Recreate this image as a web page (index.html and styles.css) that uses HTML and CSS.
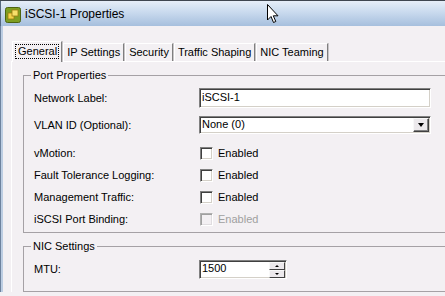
FILE: index.html
```html
<!DOCTYPE html>
<html lang="en">
<head>
    <meta charset="UTF-8">
    <title>iSCSI-1 Properties</title>
    <link rel="stylesheet" href="styles.css">
</head>
<body>
<div class="window">
    <div class="titlebar">
        <svg class="app-icon" width="16" height="16" viewBox="0 0 16 16">
            <rect x="0.5" y="0.5" width="15" height="15" rx="2" fill="#7e9e22" stroke="#4d6410"/>
            <rect x="3" y="6" width="6" height="6" fill="#f2d34a" stroke="#9a7a10" stroke-width="0.8"/>
            <rect x="7" y="3" width="6" height="6" fill="#f6df6a" stroke="#9a7a10" stroke-width="0.8"/>
        </svg>
        <span class="title">iSCSI-1 Properties</span>
        <svg class="cursor" width="13" height="20" viewBox="0 0 13 20">
            <path d="M0.5 0.5 L0.5 16 L4 12.5 L6.5 18.5 L8.8 17.5 L6.3 11.8 L11 11.8 Z" fill="#fff" stroke="#000" stroke-width="1"/>
        </svg>
    </div>
    <div class="client">
        <div class="tabs">
            <div class="tab active"><span class="focus">General</span></div>
            <div class="tab">IP Settings</div>
            <div class="tab">Security</div>
            <div class="tab">Traffic Shaping</div>
            <div class="tab">NIC Teaming</div>
        </div>
        <div class="panel">
            <fieldset class="group port">
                <legend>Port Properties</legend>
                <div class="row row-input">
                    <span class="label">Network Label:</span>
                    <div class="textbox wide">iSCSI-1</div>
                </div>
                <div class="row row-combo">
                    <span class="label">VLAN ID (Optional):</span>
                    <div class="textbox wide combo">None (0)<span class="drop-btn"><span class="arrow"></span></span></div>
                </div>
                <div class="row">
                    <span class="label">vMotion:</span>
                    <div class="check"><span class="box"></span>Enabled</div>
                </div>
                <div class="row">
                    <span class="label">Fault Tolerance Logging:</span>
                    <div class="check"><span class="box"></span>Enabled</div>
                </div>
                <div class="row">
                    <span class="label">Management Traffic:</span>
                    <div class="check"><span class="box"></span>Enabled</div>
                </div>
                <div class="row">
                    <span class="label">iSCSI Port Binding:</span>
                    <div class="check disabled"><span class="box"></span>Enabled</div>
                </div>
            </fieldset>
            <fieldset class="group nic">
                <legend>NIC Settings</legend>
                <div class="row row-input">
                    <span class="label">MTU:</span>
                    <div class="textbox spin">1500
                        <span class="spin-btns">
                            <span class="spin-btn"><span class="arrow up"></span></span>
                            <span class="spin-btn"><span class="arrow"></span></span>
                        </span>
                    </div>
                </div>
            </fieldset>
        </div>
    </div>
</div>
</body>
</html>
```

FILE: styles.css
```css
body {
    margin: 0;
    background-color: #f3f0f3;
    font-family: "Liberation Sans", Arial, sans-serif;
    font-size: 11px;
    color: #000;
}

.window {
    height: 296px;
    overflow: hidden;
}

.titlebar {
    position: relative;
    height: 25px;
    border-top: 1px solid #3f4650;
    background: linear-gradient(to bottom, #e6eef8 0%, #c9daee 45%, #a6bfdd 100%);
    display: flex;
    align-items: center;
    padding-left: 5px;
    box-shadow: inset 1px 0 #55687f;
}

.app-icon {
    margin-right: 4px;
    margin-top: 2px;
}

.title {
    font-size: 12px;
    margin-top: 1px;
}

.cursor {
    position: absolute;
    left: 267px;
    top: 3px;
}

.client {
    padding: 15px 0 0 11px;
    background: linear-gradient(to right, #6d829e 0 1px, #bccde2 1px 3px, #f3f0f3 3px);
}

.tabs {
    display: flex;
    align-items: flex-end;
    height: 20px;
    padding-left: 1px;
}

.tab {
    height: 17px;
    line-height: 17px;
    padding: 0 3px;
    border-top: 1px solid #fff;
    border-left: 1px solid #fff;
    border-right: 1px solid #7f7f7f;
    box-shadow: 1px 0 0 #c8c5c8;
    margin-right: 1px;
    white-space: nowrap;
}

.tab.active {
    position: relative;
    z-index: 1;
    height: 20px;
    line-height: 16px;
    padding: 0 2px;
    margin-bottom: -1px;
    background-color: #f3f0f3;
}

.focus {
    display: inline-block;
    line-height: 13px;
    padding: 0 1px 0 2px;
    border: 1px dotted #000;
    margin-top: 2px;
}

.panel {
    border-top: 1px solid #fff;
    border-left: 1px solid #fff;
    padding: 7px 0 0 11px;
}

.group {
    margin: 0;
    border: 1px solid #a5a1a5;
    border-right: none;
    padding: 6px 0 2px 10px;
    min-width: 0;
}

.group legend {
    padding: 0 2px;
    margin-left: -3px;
    line-height: 13px;
}

.group.nic {
    margin-top: 7px;
    padding: 7px 0 12px 10px;
}

.row {
    display: flex;
    align-items: center;
    height: 22px;
    line-height: 13px;
}

.row-input {
    height: 20px;
    margin-bottom: 8px;
}

.row-combo {
    height: 18px;
    margin-bottom: 8px;
}

.nic .row-input {
    height: 19px;
    margin-bottom: 0;
}

.label {
    width: 165px;
    flex-shrink: 0;
}

.textbox {
    position: relative;
    box-sizing: border-box;
    height: 20px;
    line-height: 16px;
    padding-left: 2px;
    background-color: #fff;
    border: 1px solid;
    border-color: #808080 #fff #fff #808080;
    box-shadow: inset 1px 1px #404040, inset -1px -1px #d4d0c8;
}

.textbox.wide {
    width: 232px;
}

.textbox.combo {
    height: 18px;
    line-height: 14px;
}

.drop-btn {
    position: absolute;
    right: 1px;
    top: 1px;
    width: 16px;
    height: 14px;
    box-sizing: border-box;
    background-color: #ece9ec;
    border: 1px solid;
    border-color: #f8f8f8 #404040 #404040 #f8f8f8;
    box-shadow: inset -1px -1px #808080;
    display: flex;
    align-items: center;
    justify-content: center;
}

.arrow {
    width: 0;
    height: 0;
    border-left: 3px solid transparent;
    border-right: 3px solid transparent;
    border-top: 4px solid #000;
}

.arrow.up {
    border-top: 0;
    border-bottom: 3px solid #000;
}

.check {
    display: flex;
    align-items: center;
}

.check .box {
    box-sizing: border-box;
    width: 13px;
    height: 13px;
    margin-left: 1px;
    margin-right: 5px;
    background-color: #fff;
    border: 1px solid;
    border-color: #808080 #fff #fff #808080;
    box-shadow: inset 1px 1px #404040, inset -1px -1px #d4d0c8;
}

.check.disabled {
    color: #a0a0a0;
}

.check.disabled .box {
    background-color: #f3f0f3;
    box-shadow: inset 1px 1px #a0a0a0, inset -1px -1px #e0dde0;
    border-color: #b0b0b0 #fff #fff #b0b0b0;
}

.textbox.spin {
    width: 88px;
    height: 19px;
    line-height: 15px;
}

.spin-btns {
    position: absolute;
    right: 1px;
    top: 1px;
    display: flex;
    flex-direction: column;
}

.spin-btn {
    box-sizing: border-box;
    width: 16px;
    height: 8px;
    background-color: #ece9ec;
    border: 1px solid;
    border-color: #f8f8f8 #404040 #404040 #f8f8f8;
    display: flex;
    align-items: center;
    justify-content: center;
}

.spin-btn .arrow {
    border-left-width: 2px;
    border-right-width: 2px;
    border-top-width: 2px;
}

.spin-btn .arrow.up {
    border-bottom-width: 2px;
}
```
